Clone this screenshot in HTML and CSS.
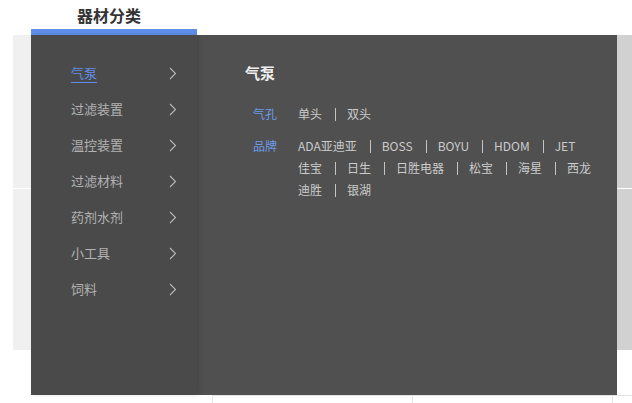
FILE: index.html
```html
<!DOCTYPE html>
<html lang="zh-CN">
<head>
    <meta charset="UTF-8">
    <meta name="viewport" content="width=device-width, initial-scale=1.0">
    <title>器材分类</title>
    <link rel="stylesheet" href="styles.css">
</head>
<body>

    <!-- Category tab -->
    <div class="nav">
        <div class="cat-tab">器材分类</div>
    </div>

    <div class="stage">
        <!-- Banner behind the menu -->
        <div class="banner">
            <div class="banner-cell light"></div>
            <div class="banner-cell dark"></div>
            <div class="banner-cell light"></div>
            <div class="banner-cell dark"></div>
        </div>

        <!-- Product row under the banner -->
        <div class="goods-row">
            <div class="goods-cell"></div>
            <div class="goods-cell"></div>
            <div class="goods-cell"></div>
        </div>

        <!-- Category dropdown -->
        <div class="cat-menu">
            <ul class="cat-list">
                <li class="cat-item active"><span class="cat-name">气泵</span><svg class="chev" width="8" height="13" viewBox="0 0 8 13"><polyline points="1,1 6.5,6.5 1,12"/></svg></li>
                <li class="cat-item"><span class="cat-name">过滤装置</span><svg class="chev" width="8" height="13" viewBox="0 0 8 13"><polyline points="1,1 6.5,6.5 1,12"/></svg></li>
                <li class="cat-item"><span class="cat-name">温控装置</span><svg class="chev" width="8" height="13" viewBox="0 0 8 13"><polyline points="1,1 6.5,6.5 1,12"/></svg></li>
                <li class="cat-item"><span class="cat-name">过滤材料</span><svg class="chev" width="8" height="13" viewBox="0 0 8 13"><polyline points="1,1 6.5,6.5 1,12"/></svg></li>
                <li class="cat-item"><span class="cat-name">药剂水剂</span><svg class="chev" width="8" height="13" viewBox="0 0 8 13"><polyline points="1,1 6.5,6.5 1,12"/></svg></li>
                <li class="cat-item"><span class="cat-name">小工具</span><svg class="chev" width="8" height="13" viewBox="0 0 8 13"><polyline points="1,1 6.5,6.5 1,12"/></svg></li>
                <li class="cat-item"><span class="cat-name">饲料</span><svg class="chev" width="8" height="13" viewBox="0 0 8 13"><polyline points="1,1 6.5,6.5 1,12"/></svg></li>
            </ul>

            <div class="cat-detail">
                <h3 class="detail-title">气泵</h3>
                <dl class="attr">
                    <dt>气孔</dt>
                    <dd>
                        <ul class="attr-values">
                            <li>单头</li>
                            <li>双头</li>
                        </ul>
                    </dd>
                </dl>
                <dl class="attr">
                    <dt>品牌</dt>
                    <dd>
                        <ul class="attr-values">
                            <li>ADA亚迪亚</li>
                            <li>BOSS</li>
                            <li>BOYU</li>
                            <li>HDOM</li>
                            <li>JET</li>
                            <li>佳宝</li>
                            <li>日生</li>
                            <li>日胜电器</li>
                            <li>松宝</li>
                            <li>海星</li>
                            <li>西龙</li>
                            <li>迪胜</li>
                            <li>银湖</li>
                        </ul>
                    </dd>
                </dl>
            </div>
        </div>
    </div>

</body>
</html>
```

FILE: styles.css
```css
body {
    margin: 0;
    font-family: "Noto Sans CJK SC", "Noto Sans", sans-serif;
    background: #fff;
    color: #333;
    width: 632px;
    overflow: hidden;
}
ul, dl, dd, h3 { margin: 0; padding: 0; list-style: none; }

.nav { height: 35px; padding-left: 31px; }
.cat-tab {
    width: 120px; height: 24px; padding: 5px 0 0 46px;
    font-size: 16px; font-weight: bold; line-height: 20px; color: #333;
    border-bottom: 6px solid #5f8ee8;
}

.stage { position: relative; }
.banner {
    display: grid; grid-template-columns: 604px 1fr; grid-template-rows: 153px 161px;
    row-gap: 1px; background: #fff; margin-left: 13px; height: 315px;
}
.banner-cell.light { background: #f0f0f0; }
.banner-cell.dark { background: #d1d1d1; }

.goods-row {
    display: flex; margin: 45px 0 0 212px; border-top: 1px solid #e3e3e3; overflow: hidden;
}
.goods-cell { flex: none; width: 199px; height: 20px; border-left: 1px solid #e3e3e3; }

.cat-menu {
    position: absolute; top: 0; left: 31px; width: 586px; height: 360px;
    display: flex; background: #505050;
}
.cat-list {
    width: 166px; padding-top: 20px; background: #4a4a4a;
    box-shadow: 2px 0 4px rgba(0, 0, 0, 0.12); position: relative; z-index: 1;
}
.cat-item {
    height: 36px; display: flex; align-items: center; justify-content: space-between;
    padding: 0 20px 0 40px; font-size: 13px; color: #b2b2b2;
}
.cat-name { line-height: 18px; border-bottom: 1px solid transparent; }
.cat-item.active .cat-name { color: #5f8ee8; border-bottom-color: #5f8ee8; }
.chev { fill: none; stroke: #b8b8b8; stroke-width: 1.1; }

.cat-detail { flex: 1; padding: 28px 12px 0 48px; }
.detail-title { font-size: 15px; line-height: 20px; font-weight: bold; color: #eee; margin-bottom: 20px; }
.attr { display: flex; margin: 0 0 10px 8px; font-size: 12px; line-height: 22px; }
.attr dt { width: 45px; flex: none; color: #6b9bea; }
.attr dd { flex: 1; overflow: hidden; }
.attr-values { display: flex; flex-wrap: wrap; margin-left: -25px; color: #cbcbcb; }
.attr-values li { display: flex; align-items: center; }
.attr-values li::before {
    content: ""; width: 1px; height: 13px; background: #c4c4c4; margin: 0 11px 0 13px;
}
```
